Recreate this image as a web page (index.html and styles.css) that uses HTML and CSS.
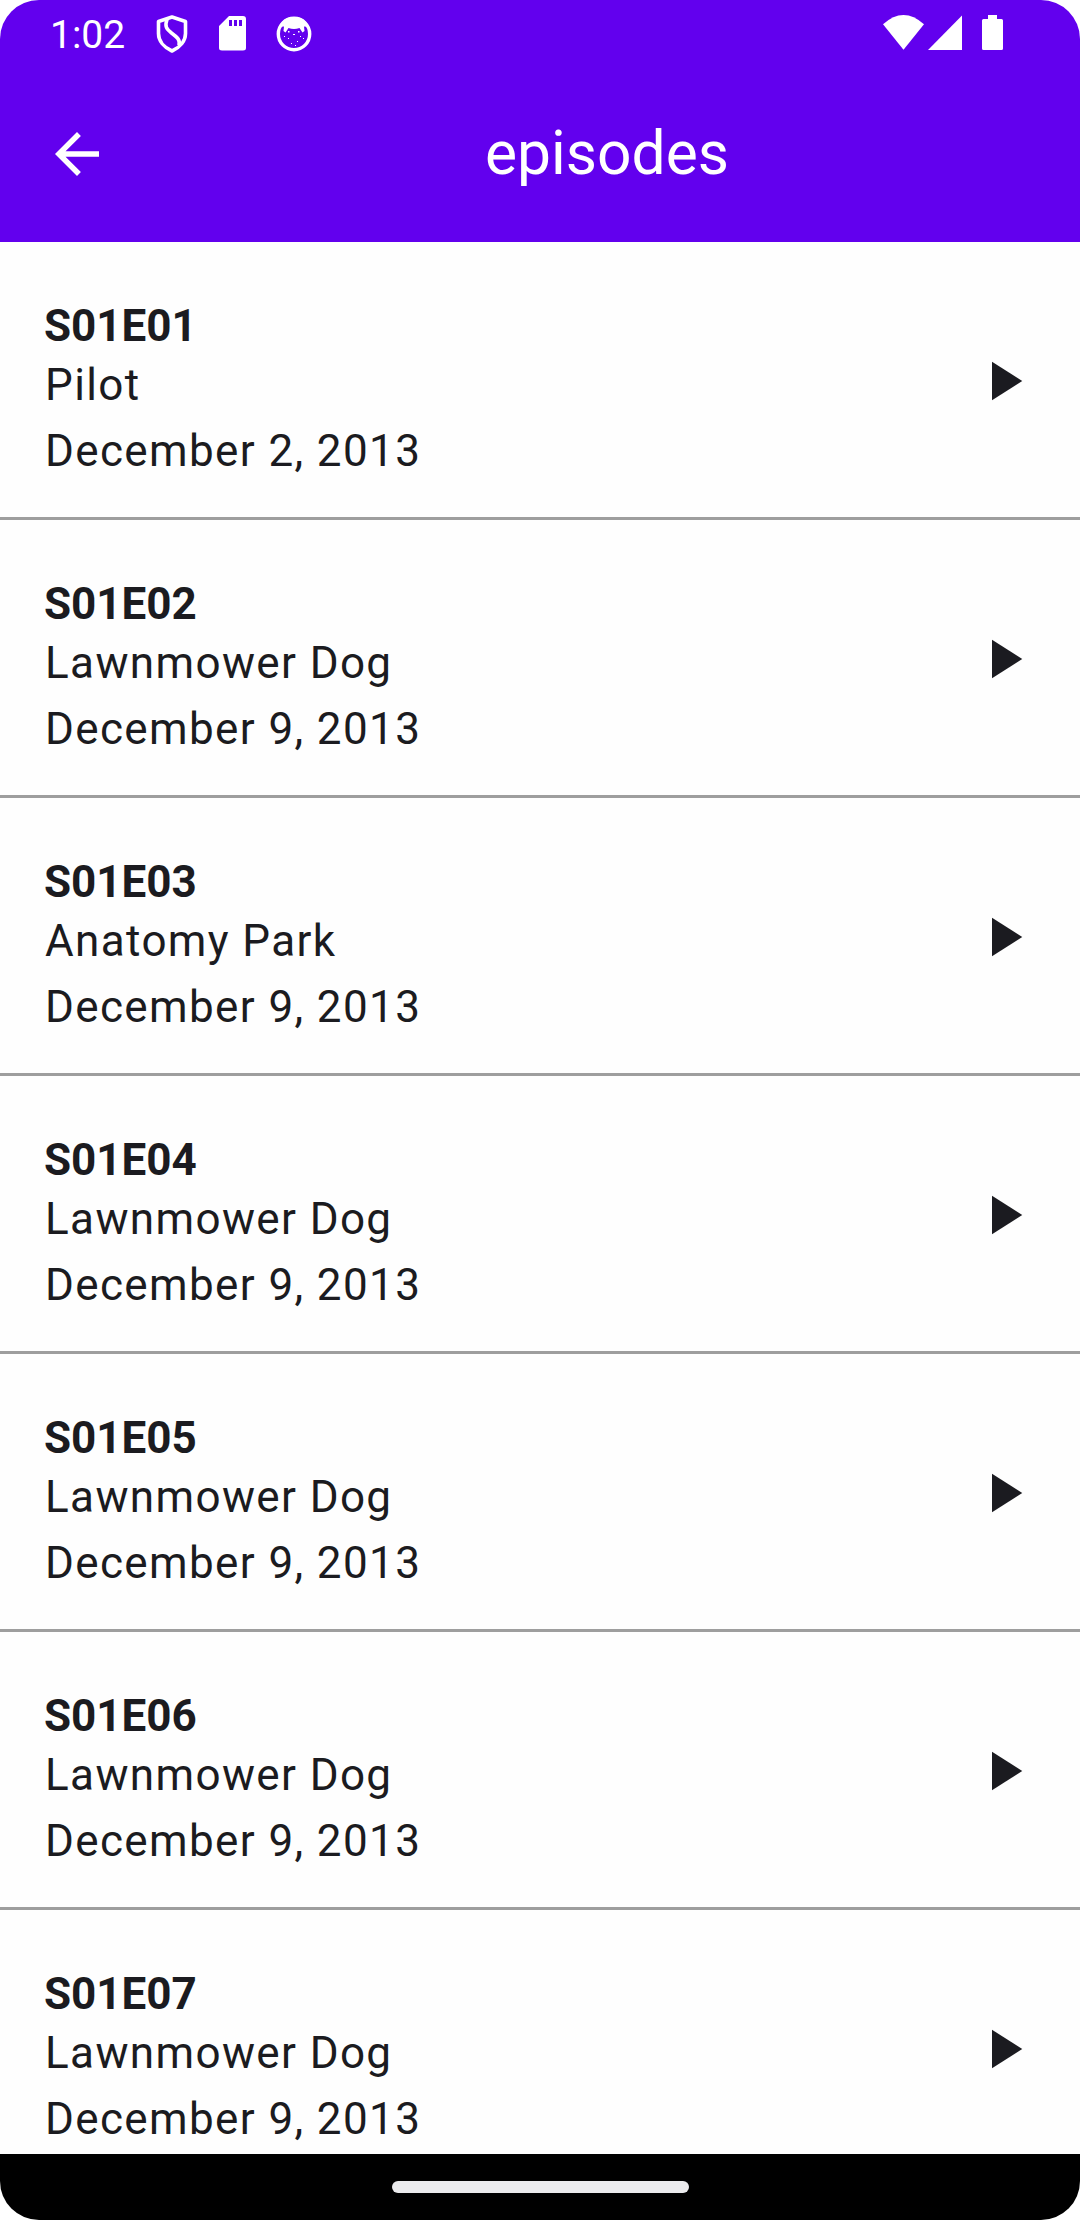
FILE: index.html
```
<!DOCTYPE html>
<html lang="en">
<head>
<meta charset="utf-8">
<title>episodes</title>
<link rel="stylesheet" href="styles.css">
</head>
<body>
<svg class="defs" width="0" height="0" aria-hidden="true">
  <symbol id="play" viewBox="0 0 24 24"><path d="M8 5v14l11-7z"/></symbol>
</svg>
<div class="screen">
  <header class="top">
    <div class="status">
      <span class="clock">1:02</span>
      <svg class="shield" viewBox="0 0 32 38" fill="none" stroke="#fff" stroke-width="3.6" stroke-linejoin="round">
        <path d="M16 2 29.500 6.500v12c0 7.500-5.500 14-13.500 17.500C8 32.500 2.500 26 2.500 18.500v-12z"/>
        <path d="M11 4.500c-2.500 7-.5 9.500 4.500 13.500 6 4.500 9 7 7.500 12.500"/>
      </svg>
      <svg class="sd" viewBox="0 0 27 35" fill="#fff">
        <path fill-rule="evenodd" d="M10 0h14q3 0 3 3v29q0 2.500-3 2.500H3q-3 0-3-2.500V10zM10 4v6h3V4zm5 0v6h3V4zm5 0v6h3V4z"/>
      </svg>
      <svg class="cat" viewBox="0 0 36 36">
        <circle cx="18" cy="18" r="15.700" fill="none" stroke="#fff" stroke-width="3.400"/>
        <path fill="#fff" d="M3 11C6 4 11 1 18 1s12 3 15 10l-5-.5.500 4.500-2 1.500-3-4.500q-5.500 2-11 0l-3 4.500-2-1.500.500-4.500z"/>
        <path fill="#fff" d="M12 15h1.500v1.500H12zM22 15h1.500v1.500H22zM8 20h1v1H8zM12 22h1v1h-1zM17 18h2v1h-2zM24 20h1v1h-1zM27 22h1v1h-1zM15 27h1v1h-1zM21 25h1v1h-1zM19 29h1v1h-1z"/>
      </svg>
      <svg class="signals" viewBox="0 0 121 36" fill="#fff">
        <path d="M0 9.300Q20.500-9.300 41 9.300L20.500 34.700z"/>
        <path d="M79 .500V35H45z"/>
        <path d="M105 0h9v4h4.500q1.500 0 1.500 1.500v28q0 1.500-1.500 1.500h-18q-1.500 0-1.500-1.500v-28Q99 4 100.500 4h4.500z"/>
      </svg>
    </div>
    <div class="bar">
      <svg class="back" viewBox="0 0 24 24" fill="#fff"><path d="M20 11H7.830l5.590-5.590L12 4l-8 8 8 8 1.410-1.410L7.830 13H20z"/></svg>
      <h1 class="title">episodes</h1>
    </div>
  </header>
  <main class="list">
    <article class="row"><div class="info"><b class="code">S01E01</b><span>Pilot</span><span>December 2, 2013</span></div><svg class="play"><use href="#play"/></svg></article>
    <article class="row"><div class="info"><b class="code">S01E02</b><span>Lawnmower Dog</span><span>December 9, 2013</span></div><svg class="play"><use href="#play"/></svg></article>
    <article class="row"><div class="info"><b class="code">S01E03</b><span>Anatomy Park</span><span>December 9, 2013</span></div><svg class="play"><use href="#play"/></svg></article>
    <article class="row"><div class="info"><b class="code">S01E04</b><span>Lawnmower Dog</span><span>December 9, 2013</span></div><svg class="play"><use href="#play"/></svg></article>
    <article class="row"><div class="info"><b class="code">S01E05</b><span>Lawnmower Dog</span><span>December 9, 2013</span></div><svg class="play"><use href="#play"/></svg></article>
    <article class="row"><div class="info"><b class="code">S01E06</b><span>Lawnmower Dog</span><span>December 9, 2013</span></div><svg class="play"><use href="#play"/></svg></article>
    <article class="row"><div class="info"><b class="code">S01E07</b><span>Lawnmower Dog</span><span>December 9, 2013</span></div><svg class="play"><use href="#play"/></svg></article>
  </main>
  <footer class="nav"><div class="handle"></div></footer>
</div>
</body>
</html>
```
FILE: styles.css
```
* { box-sizing: border-box; }
body { margin: 0; background: #fff; font-family: Roboto, sans-serif; color: #1b1b20; }
.defs { display: none; }
.screen {
  display: flex;
  flex-direction: column;
  width: 1080px;
  height: 2220px;
  overflow: hidden;
  border-radius: 39px;
  background: #fefefe;
}
.top { flex: none; height: 242px; background: #6200ee; color: #fff; }
.status { display: flex; align-items: flex-start; height: 66px; padding: 15px 76px 0 50px; }
.clock { width: 106px; margin-top: -3px; font-size: 39px; line-height: 46px; }
.shield { width: 32px; height: 38px; }
.sd { width: 27px; height: 35px; margin: 1px 0 0 31px; }
.cat { width: 36px; height: 36px; margin: 1px 0 0 30px; }
.signals { width: 121px; height: 36px; margin-left: auto; }
.bar { display: flex; align-items: center; height: 176px; padding: 0 44px; }
.back { width: 66px; height: 66px; }
.title { flex: 1; margin: 0 0 2px 68px; text-align: center; font-size: 60.5px; font-weight: 400; line-height: 77px; }
.list { flex: 1; min-height: 0; overflow: hidden; }
.row {
  display: flex;
  align-items: center;
  justify-content: space-between;
  height: 278px;
  padding: 36px 44px 33px;
  border-bottom: 3px solid #9e9e9e;
}
.info { display: flex; flex-direction: column; padding-top: 22px; font-size: 44px; line-height: 66px; }
.info span { padding-left: 1px; letter-spacing: 1.375px; }
.code { font-weight: 700; line-height: 52px; }
.play { width: 66px; height: 66px; fill: #1b1b20; }
.nav { flex: none; display: flex; justify-content: center; height: 66px; padding-top: 27px; background: #000; }
.handle { width: 297px; height: 12px; border-radius: 6px; background: #ebebed; }
```
